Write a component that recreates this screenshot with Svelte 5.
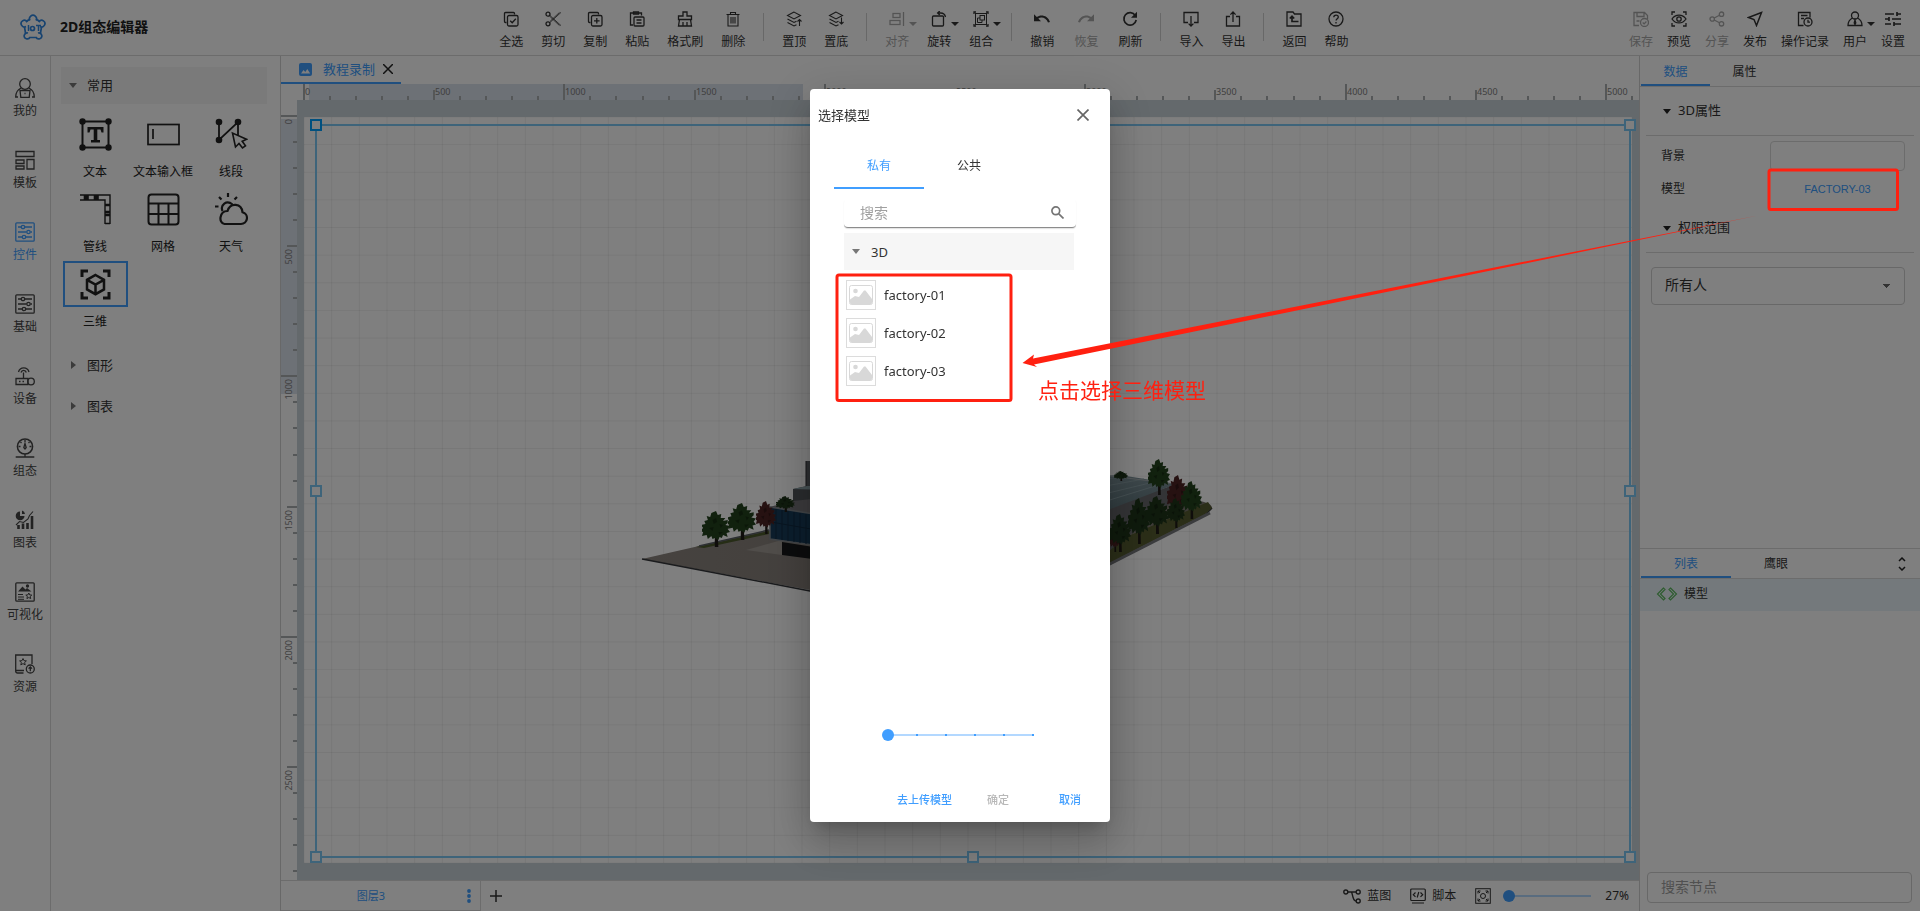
<script>
  const icons = {
    selectAll: '<path d="M3.5 11.5h-1a1 1 0 0 1-1-1v-8a1 1 0 0 1 1-1h8a1 1 0 0 1 1 1v1"/><rect x="4.5" y="4.5" width="10.5" height="10.5" rx="1.5"/><path d="m7.2 9.8 2 2 3.6-4"/>',
    cut: '<circle cx="3" cy="3.2" r="2"/><circle cx="3" cy="12.8" r="2"/><path d="M4.6 4.2 16 14.6M4.6 11.8 16 1.4M5.2 5.8l9.300 8.800M5.200 10.200l9.300-8.800" stroke-width=".8"/>',
    copy: '<path d="M3.5 11.5h-1a1 1 0 0 1-1-1v-8a1 1 0 0 1 1-1h8a1 1 0 0 1 1 1v1"/><rect x="4.5" y="4.5" width="10.5" height="10.5" rx="1.5"/><path d="M9.8 7v5.6M7 9.8h5.6"/>',
    paste: '<path d="M4 14H1.5V2h11v2.5"/><path d="M4.5 1h5v2h-5z"/><rect x="5" y="6" width="10" height="9" rx="1"/><path d="M7.5 9h5M7.5 12h5"/>',
    brush: '<path d="M6 1h4v4h4.5v3.5h-13V5H6zM2.5 8.5 1.5 15h13l-1-6.5M6 15v-4M10 15v-4"/>',
    trash: '<path d="M1.5 3.5h13M5.5 3.5v-2h5v2M3 3.5V15h10V3.5M6 6v6.5M8 6v6.5M10 6v6.5" stroke-width="1.100"/>',
    toTop: '<path d="M8 1 1.5 4.5 8 8l6.5-3.5zM1.5 8 8 11.5l2.5-1.3M1.5 11.5 8 15l2.5-1.3M13.5 15V8.5M11.5 10.5l2-2 2 2" stroke-width="1.1"/>',
    toBottom: '<path d="M8 1 1.5 4.5 8 8l6.5-3.5zM1.5 8 8 11.5l2.5-1.3M1.5 11.5 8 15l2.5-1.3M13.5 6.5V13M11.5 11l2 2 2-2" stroke-width="1.1"/>',
    align: '<path d="M14.5 1v14"/><rect x="4" y="2.5" width="7" height="4"/><rect x="1" y="9.5" width="10" height="4"/>',
    rotate: '<rect x="1.5" y="5" width="11" height="10" rx="1"/><path d="M7 2h2.5a5 5 0 0 1 5 4M8.8 0 6.6 2l2.2 2"/>',
    group: '<path d="M1 3V1h2M13 1h2v2M15 13v2h-2M3 15H1v-2"/><rect x="2.500" y="2.500" width="11" height="11" stroke-width="1"/><rect x="7" y="4.500" width="4.500" height="4.500" stroke-width="1"/><path d="M7 7H4.500v4.500H9V9" stroke-width="1"/>',
    undo: '<path d="M0 3.2v7h7L4.3 7.6C6.8 5.4 12 6 14 11.6l2-.7C13.700 4 6.500 3 2.800 6z" fill="currentColor" stroke="none"/>',
    redo: '<path d="M16 3.200v7H9l2.700-2.600C9.200 5.400 4 6 2 11.600l-2-.7C2.300 4 9.500 3 13.200 6z" fill="currentColor" stroke="none"/>',
    refresh: '<path d="M13.300 4.500A6.200 6.200 0 1 0 14.200 9" stroke-width="1.700"/><path d="M15 .8v6H9z" fill="currentColor" stroke="none"/>',
    import: '<path d="M5 11.500H1V1.500h14v10h-4M8 5v10M5.600 12.600 8 15l2.400-2.400"/>',
    export: '<path d="M5 5.500H1.500V15h13V5.500H11M8 11V1M5.400 3.600 8 1l2.600 2.600"/>',
    back: '<path d="M1 1h6l1.500 2H15v12H1z"/><path d="M6 5.500v5h6.500M3.800 7.500 6 5.300l2.200 2.200" stroke-width="1.700"/>',
    help: '<circle cx="8" cy="8" r="7"/><path d="M5.800 6.300c0-3 4.500-2.800 4.500-.2 0 1.700-2.200 1.700-2.200 3.500M8 11v1.400"/>',
    save: '<path d="M6 14.500H1V1.500h10.500l3 3V8M4 1.500v4h7v-4M3.500 10h3"/><circle cx="11.500" cy="11.500" r="4"/><path d="m9.700 11.500 1.400 1.400 2.300-2.400"/>',
    preview: '<path d="M1 4V1h3M12 1h3v3M15 12v3h-3M4 15H1v-3"/><path d="M1 8c3.500-5.200 10.500-5.200 14 0-3.500 5.200-10.500 5.200-14 0z"/><circle cx="8" cy="8" r="2.200"/>',
    share: '<circle cx="3.200" cy="8" r="2.200"/><circle cx="12.500" cy="3.200" r="2.200"/><circle cx="12.500" cy="12.800" r="2.200"/><path d="m5.200 7 5.300-2.800M5.200 9l5.300 2.800"/>',
    publish: '<path d="M14.500 1.500 1.500 6.500 7 8.500l2.500 6z" stroke-width="1.500"/>',
    record: '<path d="M6.500 14.500h-5v-13H13v5M4 4.500h6.500M4 7.500h3"/><circle cx="11" cy="11" r="4"/><path d="M11 8.800v2.400h2"/>',
    user: '<circle cx="8" cy="4.500" r="3.500"/><path d="M5.500 7C2.500 8.500 1 10.500 1 14.500h14c0-4-1.500-6-4.500-7.500M8 9l-.8 3 .8 1.400.8-1.400z"/>',
    settings: '<path d="M0 3h9M12 3h4M12 1v4M0 8h4M4 6v4M7 8h9M0 13h6M9 11v4M9 13h7" stroke-width="1.700"/>',
    mine: '<circle cx="10" cy="6" r="5.300"/><path d="M6 10C2 12 .7 15 .7 19H3M14 10c4 2 5.300 5 5.300 9H17M5 12.500h10l-.8 6.800H5.800zM9.500 15.500h1"/>',
    template: '<path d="M1 1.500h18v5H1zM1 10h8v3.500H1zM1 16h8v3H1zM12 9.500h7V19h-7z"/>',
    control: '<rect x=".8" y=".8" width="18.400" height="18.400" rx="1"/><path d="M3 5h3M10 5h7M3 10h8.500M15.500 10H17M3 15h4M11 15h6"/><circle cx="8" cy="5" r="1.700"/><circle cx="13.500" cy="10" r="1.700"/><circle cx="9" cy="15" r="1.700"/>',
    device: '<path d="M1 12.500h12v6H1zM8.500 12V6.500M3.500 6c1.500-5.500 9-5.500 10.500 0M6 6.500c.8-2.800 4.500-2.800 5.300 0M4 15.500h1.500M7.500 15.500H9"/><circle cx="16" cy="15.500" r="3.300"/>',
    scada: '<circle cx="10" cy="8.500" r="7.600" stroke-width="1.500"/><path d="M10 2v2M3.500 8.500h2M14.500 8.500h2M5.500 4l1 1M14.500 4l-1 1M10 16v3M.7 19h18.600M10 5.500 8.800 9.500 10 11l1.200-1.500z"/>',
    chart: '<path d="M5 1.500V6h4.500A4.400 4.400 0 1 1 5 1.500zM7 .5a4 4 0 0 1 3 3.500H7z" fill="currentColor" stroke="none"/><path d="M3.500 19v-4M8 19v-5.500M12.500 19v-6M17 19V6" stroke-width="2.600"/><path d="m1 15 3.500-3.500 4 1 4.500-3.500 1.500-3.500L18 1.500" stroke-width="1.100"/>',
    visual: '<rect x=".8" y=".8" width="18.400" height="18.400" rx="1"/><path d="m3 9.500 4.500-5 3 3 1.500-1.500 4.500 3.500z" fill="currentColor" stroke="none"/><circle cx="12.500" cy="4" r="1" fill="currentColor"/><path d="M3 12.500h5M3 15h6M3 17.300h6" stroke-width="1"/><path d="m13.800 11 .9 1.900 2.100.2-1.600 1.400.5 2.100-1.900-1.100-1.900 1.100.5-2.100-1.600-1.400 2.100-.2z" stroke-width="1"/>',
    asset: '<path d="M8.500 19H2.500a1.800 1.800 0 0 1-1.800-1.800V1H17v9M1 16.500h8"/><path d="m8 4.500 1 2.200 2.400.2-1.800 1.600.6 2.400L8 9.600l-2.200 1.300.6-2.400L4.600 6.900 7 6.700z" stroke-width="1"/><circle cx="15.300" cy="15" r="4"/><path d="M15.300 17.200v-4.200M13.600 14.600l1.700-1.700 1.700 1.700"/>',
    text: '<rect x="3.500" y="3.500" width="26" height="26" stroke-width="2"/><g fill="currentColor" stroke="none"><circle cx="3.500" cy="3.500" r="3.200"/><circle cx="29.500" cy="3.500" r="3.200"/><circle cx="3.500" cy="29.500" r="3.200"/><circle cx="29.500" cy="29.500" r="3.200"/><path d="M8.500 9h16v5.500h-2L21.500 11.500H18.300V22H21v2.500h-9V22h2.700V11.500h-3.200L10.500 14.500h-2z"/></g>',
    input: '<rect x="1" y="6.500" width="31" height="20" stroke-width="1.700"/><path d="M6 11v10" stroke-width="1.700"/>',
    line: '<path d="M4 4v18L23 4v14" stroke-width="1.800"/><g fill="currentColor" stroke="none"><circle cx="4" cy="4" r="3.300"/><circle cx="23" cy="4" r="3.300"/><circle cx="4" cy="22" r="3.300"/></g><path d="m17.500 15 3 14 3.500-3.500 3.500 4.500 3-2.200-3.300-4.600 4.300-2z" stroke-width="1.600" fill="#fff"/>',
    pipe: '<path d="M1 2h30v29M1 7h25v24M26 30.500h5" stroke-width="1.400"/><path d="M6 2v5M8.500 2v5M16 2v5M18.500 2v5M26 12h5M26 19h5M26 22h5" stroke-width="2.600"/>',
    grid: '<rect x="1.500" y="1.500" width="30" height="30" rx="3" stroke-width="2"/><path d="M1.500 10.500h30M1.500 21h30M11.500 10.500v21M21.500 10.500v21" stroke-width="2"/>',
    weather: '<path d="M9.500 31h16.500a6 6 0 0 0 1.500-11.800C26.500 10.500 15.500 9 12.500 18 4.500 18 3 30 9.500 31zM7.500 18C5 12 11.500 6.500 17.500 11.500" stroke-width="2.200"/><path d="M13 0v4M4 4l2.500 2.500M22 4l-2.500 2.500M-.5 13.500h4" stroke-width="2.200"/>',
    cube: '<path d="M3 9V3h6M24 3h6v6M30 24v6h-6M9 30H3v-6" stroke-width="3"/><path d="m16.500 7 8.500 4.800v9.600l-8.500 4.800L8 21.400v-9.600zM8 11.800l8.500 4.700 8.500-4.700M16.500 16.500v9.700" stroke-width="2.500"/>',
  };

  const toolGroups = [
    { items: [['全选', 'selectAll'], ['剪切', 'cut'], ['复制', 'copy'], ['粘贴', 'paste'], ['格式刷', 'brush'], ['删除', 'trash']] },
    { items: [['置顶', 'toTop'], ['置底', 'toBottom']] },
    { items: [['对齐', 'align', 'off menu'], ['旋转', 'rotate', 'menu'], ['组合', 'group', 'menu']] },
    { wide: true, items: [['撤销', 'undo'], ['恢复', 'redo', 'off'], ['刷新', 'refresh']] },
    { items: [['导入', 'import'], ['导出', 'export']] },
    { items: [['返回', 'back'], ['帮助', 'help']] },
  ];
  const userTools = [
    ['保存', 'save', 'off'], ['预览', 'preview'], ['分享', 'share', 'off'], ['发布', 'publish'],
    ['操作记录', 'record'], ['用户', 'user', 'menu'], ['设置', 'settings'],
  ];
  const rail = [
    ['我的', 'mine'], ['模板', 'template'], ['控件', 'control'], ['基础', 'control'], ['设备', 'device'],
    ['组态', 'scada'], ['图表', 'chart'], ['可视化', 'visual'], ['资源', 'asset'],
  ];
  const widgets = [
    ['文本', 'text'], ['文本输入框', 'input'], ['线段', 'line'], ['管线', 'pipe'],
    ['网格', 'grid'], ['天气', 'weather'], ['三维', 'cube'],
  ];
  const models = ['factory-01', 'factory-02', 'factory-03'];

  // One ruler step is 100 scene units.
  const step = 26.04;
  const ticks = (count) =>
    Array.from({ length: count }, (_, i) => ({
      at: Math.round(i * step),
      size: i % 10 === 0 ? 16 : i % 5 === 0 ? 10 : 4,
      label: i % 5 === 0 ? String(i * 100) : '',
    }));
  const hTicks = ticks(52);
  const vTicks = ticks(30);
  const cols = Array.from({ length: 49 }, (_, i) => (i * 100) / 48);
  const rows = Array.from({ length: 28 }, (_, i) => (i * 100) / 27);

  const trees = [
    [702, 511, 28, 36, 'g'], [728, 503, 28, 37, 'g'], [756, 501, 20, 33, 'r'], [776, 496, 19, 16, 'd'],
    [1114, 471, 14, 10, 'd'], [1148, 459, 22, 36, 'g'], [1167, 475, 22, 42, 'r'], [1181, 481, 21, 38, 'g'],
    [1108, 528, 14, 24, 'r'], [1109, 514, 22, 38, 'd'], [1128, 498, 22, 46, 'd'], [1145, 496, 24, 38, 'd'], [1167, 498, 18, 30, 'd'],
  ];
  const treeColors = { g: '#22421c', r: '#4c2222', d: '#1e3519' };

  let query = $state('');
  let nodeQuery = $state('');
  let zoomLevel = $state(0);
  let thumbSize = $state(0);
</script>

{#snippet icon(name, size, box)}
  <svg width={size} height={size} viewBox="0 0 {box} {box}" fill="none" stroke="currentColor" stroke-width="1.3" aria-hidden="true">{@html icons[name]}</svg>
{/snippet}

{#snippet tool(item)}
  <button class="tool {item[2] ?? ''}" disabled={item[2]?.includes('off')}>
    {@render icon(item[1], 16, 16)}
    <span>{item[0]}</span>
  </button>
{/snippet}

<div class="app">
  <header>
    <div class="brand">
      <svg width="26" height="26" viewBox="0 0 26 26" fill="none" stroke="#2f86e0" stroke-width="1.700">
        <path d="M9 5.500 6 8M17 5.500 20 8M4.500 13l1 6M21.500 13l-1 6M9.500 23.500h7"/>
        <path d="M10 6.500a3.500 3.500 0 1 1 6 0M6 12.500a3.300 3.300 0 1 1 1-5M20 12.500a3.300 3.300 0 1 0-1-5M8 19a3 3 0 1 0 2 4M18 19a3 3 0 1 1-2 4"/>
        <path d="M8.500 11v6M16 11.500h5M18.500 11.500V17" stroke-width="1.500"/><circle cx="12.500" cy="14.500" r="2"/>
      </svg>
      <h1>2D组态编辑器</h1>
    </div>
    <div class="tools">
      {#each toolGroups as group, i}
        {#if i}<i class="rule"></i>{/if}
        <div class="group" class:wide={group.wide}>
          {#each group.items as item}{@render tool(item)}{/each}
        </div>
      {/each}
    </div>
    <div class="group account">
      {#each userTools as item}{@render tool(item)}{/each}
    </div>
  </header>

  <main>
    <nav class="rail">
      {#each rail as item, i}
        <button class:active={i === 2}>{@render icon(item[1], 20, 20)}<span>{item[0]}</span></button>
      {/each}
    </nav>

    <aside class="library">
      <button class="fold open">常用</button>
      <div class="widgets">
        {#each widgets as item, i}
          <button class="widget" class:active={i === 6}>
            <span class="frame">{@render icon(item[1], 33, 33)}</span>
            <span>{item[0]}</span>
          </button>
        {/each}
      </div>
      <button class="fold">图形</button>
      <button class="fold">图表</button>
    </aside>

    <section class="stage">
      <div class="files">
        <button class="file">
          <svg width="13" height="13" viewBox="0 0 13 13"><rect width="13" height="13" rx="2" fill="currentColor"/><path d="m2 10.500 2.500-3.500 1.800 2 2-3 2.900 4.500z" fill="#fff"/></svg>
          <span>教程录制</span>
          <svg class="x" width="10" height="10" viewBox="0 0 10 10" stroke="#222" stroke-width="1.500"><path d="m0 0 10 10M10 0 0 10"/></svg>
        </button>
      </div>
      <div class="board">
        <i></i>
        <svg class="ruler" width="100%" height="16">
          <rect x="12" width="494" height="16" class="range"/>
          {#each hTicks as t}
            <rect x={t.at + 6} y={16 - t.size} width="2" height={t.size}/>
            <text x={t.at + 8} y="11">{t.label}</text>
          {/each}
        </svg>
        <svg class="ruler" width="16" height="100%">
          <rect y="19" width="16" height="275" class="range"/>
          {#each vTicks as t}
            <rect x={16 - t.size} y={t.at + 15} width={t.size} height="2"/>
            <text transform="translate(11 {t.at + 19}) rotate(-90)" text-anchor="end">{t.label}</text>
          {/each}
        </svg>
        <div class="canvas">
          <div class="page">
            <svg class="lines" width="100%" height="100%">
              {#each cols as c}<line x1="{c}%" x2="{c}%" y1="0" y2="100%"/>{/each}
              {#each rows as r}<line y1="{r}%" y2="{r}%" x1="0" x2="100%"/>{/each}
            </svg>
            <svg class="scene" viewBox="640 455 575 150">
              <defs>
                <linearGradient id="ground" x1="0" x2="1"><stop offset="0" stop-color="#8d8680"/><stop offset="1" stop-color="#7c7670"/></linearGradient>
                <linearGradient id="roof" x1="0" x2="0" y1="0" y2="1"><stop offset="0" stop-color="#7d9299"/><stop offset="1" stop-color="#5e757c"/></linearGradient>
              </defs>
              <path d="M642 559 699 546 770 530 850 515 1110 476 1204 502q8 2 8 6l-7 6-95 49-100 50-200-23z" fill="url(#ground)"/>
              <path d="m642 559 168 32 60 12M1212 508l-7 7-95 49-60 30" fill="none" stroke="#34363a" stroke-width="1.500"/>
              <path d="m696 547 73-16v3l-65 14z" fill="#4c5a2c"/>
              <path d="m699 546 70-16" stroke="#5a5f66" stroke-width="1.500"/>
              <path d="m746 550 36-10v15z" fill="#a09a94"/>
              <path d="M806 461h10v28h-10z" fill="#5c6064"/><path d="M806 461v28" stroke="#2b2d30"/>
              <path d="m793 489 14-3h20v20l-34-2z" fill="#54585c"/><path d="m793 489 14-3h20v4z" fill="#8fa5ab"/>
              <path d="m769 507 25-6 26-3v20z" fill="#77757a"/>
              <path d="m770 507 50 8v31l-50-7z" fill="#173c5a" stroke="#82888e" stroke-width="1.500"/>
              <path d="M776 509v30M782 510v30M788 511v30M794 512v30M800 513v30M806 514v30M771 522l40 7" stroke="#102a42"/>
              <path d="m782 542 38 6v12l-38-5z" fill="#17181a"/>
              <path d="M1100 568v-20l108-46 4 6-7 6z" fill="#565c30"/>
              <path d="m1100 569 110-56" stroke="#77797d" stroke-width="3"/>
              <path d="m1176 484-4 18-72 56v-47z" fill="#67686c"/>
              <path d="m1100 476 20-1 56 9-76 29z" fill="url(#roof)"/>
              <path d="m1100 480 28-4M1100 487l44-8M1100 495l58-14M1100 503l68-21" stroke="#8a9fa5"/>
              <path d="m1110 476 66 8" stroke="#a6adb0"/>
              {#each trees as [x, y, w, h, c]}
                <svg {x} {y} width={w} height={h} viewBox="0 0 24 36" preserveAspectRatio="none">
                  <path d="M11 22h2.500l.5 14h-3z" fill="#1f1a16"/>
                  <path d="m12 0 1.500 4 3-1-.5 4 4 0-2 3 4-1 0 3-2 2 4 1-2 3 2 3-3 1 1 4-4-2-1 3-2-1-1 3-3-2-2 1-1-3-3 3-1-4-4 1 1-4-3-1 3-3-2-3 4-1-1-3 3-1-1-4 3 1 1-4z" fill={treeColors[c]}/>
                  <path d="m9 9 3-2 1 4-3 2zm6 4 3 1-2 3zm-9 4 4-1-1 4zm8 4 4 0-3 3z" fill="#000" opacity=".3"/>
                </svg>
              {/each}
            </svg>
            <div class="selection">
              {#each ['tl', 'tr', 'ml', 'mr', 'bl', 'bc', 'br'] as p}<i class={p}></i>{/each}
            </div>
          </div>
        </div>
      </div>
      <footer>
        <div class="layer">
          <button>图层3</button>
          <svg width="4" height="14" viewBox="0 0 4 14" fill="currentColor"><circle cx="2" cy="2" r="1.900"/><circle cx="2" cy="7" r="1.900"/><circle cx="2" cy="12" r="1.900"/></svg>
        </div>
        <button class="add" aria-label="添加图层"><svg width="12" height="12" viewBox="0 0 12 12" stroke="currentColor" stroke-width="1.500"><path d="M6 0v12M0 6h12"/></svg></button>
        <button class="foot"><svg width="18" height="16" viewBox="0 0 18 16" fill="none" stroke="currentColor" stroke-width="1.400"><circle cx="2.800" cy="4" r="2"/><circle cx="15.200" cy="4" r="2"/><circle cx="15.200" cy="13" r="2"/><path d="M5 4h8M8 4c2 0 1 9 5 9"/></svg>蓝图</button>
        <button class="foot"><svg width="16" height="16" viewBox="0 0 16 16" fill="none" stroke="currentColor" stroke-width="1.200"><rect x=".7" y="1" width="14.600" height="11.500" rx="1"/><path d="M2 15h12M5.500 4.500 3.300 6.700l2.200 2.200M10.500 4.500l2.200 2.200-2.200 2.200M8.800 4 7.200 9.500"/></svg>脚本</button>
        <button aria-label="适应画布"><svg width="16" height="16" viewBox="0 0 16 16" fill="none" stroke="currentColor" stroke-width="1"><rect x=".7" y=".7" width="14.600" height="14.600"/><circle cx="8" cy="8" r="2.500"/><path d="M3 5.500V3h2.500M10.500 3H13v2.500M13 10.500V13h-2.500M5.500 13H3v-2.500M3 3l2 2M13 3l-2 2M13 13l-2-2M3 13l2-2"/></svg></button>
        <input class="slider zoom" type="range" min="0" max="100" bind:value={zoomLevel} aria-label="缩放"/>
        <output>27%</output>
      </footer>
    </section>

    <aside class="inspector">
      <div class="tabs"><button class="active">数据</button><button>属性</button></div>
      <div class="props">
        <button class="head">3D属性</button>
        <div class="fields">
          <label for="bg">背景</label><input id="bg" class="swatch" type="text"/>
          <span>模型</span><button class="pick">FACTORY-03</button>
        </div>
        <button class="head">权限范围</button>
        <div class="scope">
          <select aria-label="权限范围"><option>所有人</option></select>
        </div>
      </div>
      <div class="outline">
        <div class="tabs lower">
          <button class="active">列表</button><button>鹰眼</button>
          <svg width="8" height="14" viewBox="0 0 8 14" fill="none" stroke="#222" stroke-width="1.500"><path d="m1 4 3-3 3 3M1 10l3 3 3-3"/></svg>
        </div>
        <button class="node">
          <svg width="22" height="14" viewBox="0 0 22 14" fill="none" stroke="#5cb860" stroke-width="1.200"><path d="M7.500 1 1.500 7l6 6 1.500-1.500L4.500 7 9 2.500zM14.500 1l6 6-6 6-1.500-1.500L17.500 7 13 2.500z"/></svg>
          模型
        </button>
        <div class="search-node"><input type="text" placeholder="搜索节点" aria-label="搜索节点" bind:value={nodeQuery}/></div>
      </div>
    </aside>
  </main>
</div>

<div class="backdrop">
  <div class="dialog" role="dialog" aria-labelledby="dialog-title">
    <div class="title">
      <h2 id="dialog-title">选择模型</h2>
      <button aria-label="关闭"><svg width="12" height="12" viewBox="0 0 12 12" stroke="#666" stroke-width="1.700"><path d="m.5.5 11 11M11.500.5l-11 11"/></svg></button>
    </div>
    <div class="kinds"><button class="active">私有</button><button>公共</button></div>
    <div class="search">
      <input type="text" placeholder="搜索" aria-label="搜索" bind:value={query}/>
      <svg width="13" height="13" viewBox="0 0 13 13" fill="none" stroke="#757575" stroke-width="1.700"><circle cx="4.800" cy="4.800" r="3.900"/><path d="m7.800 7.800 4.700 4.700"/></svg>
    </div>
    <button class="category">3D</button>
    <div class="models">
      {#each models as model}
        <button>
          <span class="thumb">
            <svg width="24" height="20" viewBox="0 0 24 20"><rect x=".5" y=".5" width="23" height="19" rx="2" fill="#fff" stroke="#d8d8d8"/><circle cx="6.500" cy="6" r="2.300" fill="#d8d8d8"/><path d="M1 14.500 6 11l4 1 5-6.500h1.500L23 14v3.500a2 2 0 0 1-2 2H3a2 2 0 0 1-2-2z" fill="#d8d8d8"/></svg>
          </span>
          {model}
        </button>
      {/each}
    </div>
    <input class="slider size" type="range" min="0" max="5" bind:value={thumbSize} aria-label="缩略图大小"/>
    <div class="actions">
      <button>去上传模型</button><button disabled>确定</button><button>取消</button>
    </div>
  </div>
</div>

<svg class="notes" viewBox="0 0 1920 911" preserveAspectRatio="xMidYMin meet">
  <rect x="837" y="275" width="174" height="125.500" rx="2"/>
  <rect x="1769" y="170" width="128.500" height="39.500" rx="2"/>
  <path d="M1022.500 363 1034 354.500 1033 358.500 1758 215.500 1034 364.500 1037 367z"/>
  <text x="1038" y="398">点击选择三维模型</text>
</svg>

<style>
  :global(body) { margin: 0; background: #fff; }
  .app, .backdrop, .notes { font-family: "Noto Sans", "Noto Sans CJK SC", sans-serif; font-size: 12px; line-height: 16px; color: #333; }
  *, *::before, *::after { box-sizing: border-box; }
  button, input, select { font: inherit; color: inherit; background: none; border: 0; padding: 0; margin: 0; outline: 0; }
  svg { display: block; flex: none; }
  .app { height: 100vh; display: flex; flex-direction: column; overflow: hidden; }

  header { display: flex; align-items: stretch; height: 56px; border-bottom: 1px solid #d8d8d8; flex: none; }
  .brand { flex: 0 0 26%; display: flex; align-items: center; gap: 14px; padding: 0 0 2px 20px; }
  h1 { font-size: 14px; line-height: 20px; margin: 0; color: #222; }
  .tools { display: flex; gap: 18px; margin-right: auto; }
  .group { display: flex; gap: 18px; }
  .group.wide { gap: 20px; }
  .account { gap: 14px; padding-right: 15px; }
  .rule { width: 1px; background: #d0d0d0; height: 28px; margin-top: 13px; }
  .tool { position: relative; display: flex; flex-direction: column; align-items: center; gap: 7px; padding-top: 11px; white-space: nowrap; }
  .tool.off { color: #a8a8a8; }
  .menu::after { content: ""; position: absolute; left: 100%; top: 22px; border: 4px solid transparent; border-top-color: currentColor; border-bottom: 0; }

  main { flex: 1; display: flex; min-height: 0; }
  .rail { width: 51px; border-right: 1px solid #d8d8d8; padding-top: 22px; display: flex; flex-direction: column; gap: 28px; flex: none; }
  .rail button { display: flex; flex-direction: column; align-items: center; gap: 5px; height: 44px; color: #444; white-space: nowrap; }
  .rail .active { color: #409eff; }

  .library { width: 230px; border-right: 1px solid #d0d0d0; padding: 11px 13px 0 10px; flex: none; }
  .fold { position: relative; display: block; width: 100%; height: 37px; margin-bottom: 4px; padding: 0 0 2px 26px; text-align: left; font-size: 13px; }
  .fold::before { content: ""; position: absolute; left: 10px; top: 14px; border: 4px solid transparent; border-left: 5px solid #777; border-right: 0; }
  .fold.open { background: #f5f5f5; margin-bottom: 7px; }
  .fold.open::before { left: 8px; top: 16px; border: 4px solid transparent; border-top: 5px solid #777; border-bottom: 0; }
  .widgets { display: grid; grid-template-columns: repeat(3, 68px); padding-bottom: 11px; }
  .widget { display: flex; flex-direction: column; align-items: center; line-height: 29px; white-space: nowrap; color: #222; }
  .frame { display: grid; place-items: center; width: 65px; height: 46px; border: 2px solid transparent; }
  .active .frame { border-color: #409eff; }

  .stage { flex: 1; min-width: 0; display: flex; flex-direction: column; }
  .files { height: 28px; flex: none; }
  .file { display: flex; align-items: center; width: 120px; height: 28px; padding-left: 18px; color: #409eff; border-bottom: 2px solid #409eff; font-size: 13px; white-space: nowrap; }
  .file span { margin: 0 8px 0 11px; }
  .board { flex: 1; min-height: 0; display: grid; grid-template: 16px minmax(0, 1fr) / 16px minmax(0, 1fr); }
  .ruler { overflow: hidden; fill: #aaaeb0; }
  .ruler .range { fill: #dbe2ed; }
  .ruler text { font-size: 9px; fill: #808080; }
  .canvas { background: #c9d3d9; padding: 17px 7px; display: flex; }
  .page { flex: 1; position: relative; background: #fff; }
  .lines { position: absolute; stroke: #000; stroke-opacity: .06; }
  .scene { position: absolute; left: 25.3%; top: 45.3%; width: 43.3%; }
  .selection { position: absolute; inset: 7px 1px 5px 11px; border: 2px solid #7cc8f4; }
  .selection i { position: absolute; width: 12px; height: 12px; border: 2px solid #7cc8f4; background: #fff; margin: -7px; }
  .selection .tl { left: 0; top: 0; border-color: #00a0ff; }
  .selection .tr { left: 100%; top: 0; }
  .selection .ml { left: 0; top: 50%; }
  .selection .mr { left: 100%; top: 50%; }
  .selection .bl { left: 0; top: 100%; }
  .selection .bc { left: 50%; top: 100%; }
  .selection .br { left: 100%; top: 100%; }
  .selection .tr, .selection .mr, .selection .br { margin-left: -5px; }
  .selection .bl, .selection .bc, .selection .br { margin-top: -5px; }
  .selection .ml, .selection .mr { margin-top: -6px; }
  .selection .bc { margin-left: -6px; }

  footer { display: flex; align-items: center; height: 31px; border-top: 1px solid #d8d8d8; flex: none; padding-right: 10px; }
  .layer { display: flex; align-items: center; width: 200px; align-self: stretch; border: 1px solid #d8d8d8; border-width: 0 1px 1px 0; color: #409eff; font-size: 11px; padding-right: 9px; }
  .layer button { flex: 1; padding-right: 6px; }
  .add { margin: 0 auto 0 9px; }
  .foot { display: flex; align-items: center; gap: 6px; margin-right: 19px; }
  output { margin-left: 8px; font-size: 12px; }

  .slider { appearance: none; height: 12px; }
  .slider::-webkit-slider-runnable-track { height: 12px; background: linear-gradient(#b3d8ff, #b3d8ff) center / calc(100% - 12px) 2px no-repeat; }
  .slider::-webkit-slider-thumb { appearance: none; width: 12px; height: 12px; border-radius: 50%; background: #409eff; }
  .zoom { width: 94px; margin-left: 12px; }

  .inspector { width: 281px; border-left: 1px solid #d0d0d0; flex: none; display: flex; flex-direction: column; }
  .tabs { display: flex; height: 31px; border-bottom: 1px solid #d8d8d8; flex: none; padding-left: 1px; }
  .tabs button { width: 69px; border-bottom: 2px solid transparent; padding-top: 3px; }
  .tabs .active, .kinds .active { color: #409eff; border-bottom-color: #409eff; }
  .lower { border-top: 1px solid #d8d8d8; }
  .lower button { width: 90px; }
  .lower svg { margin: auto 14px auto auto; }
  .props { flex: 56 1 0; min-height: 0; padding: 0 6px; }
  .outline { flex: 44 1 0; min-height: 0; display: flex; flex-direction: column; }
  .head { position: relative; display: block; width: 100%; height: 49px; padding: 0 0 2px 32px; text-align: left; font-size: 13px; border-bottom: 1px solid #d8d8d8; }
  .head::before { content: ""; position: absolute; left: 17px; top: 22px; border: 4px solid transparent; border-top: 5px solid #222; border-bottom: 0; }
  .fields { display: grid; grid-template-columns: 1fr 135px; padding: 5px 9px 0 15px; align-items: center; row-gap: 2px; height: 68px; }
  .swatch { height: 30px; border: 1px solid #d8d8d8; border-radius: 4px; }
  .pick { font: 11px "Liberation Sans", sans-serif; color: #409eff; height: 30px; }
  .scope { padding: 14px 9px 0 5px; }
  .scope select { appearance: none; width: 100%; height: 38px; border: 1px solid #d0d0d0; border-radius: 4px; padding: 0 0 2px 13px; font-size: 14px; background: linear-gradient(to bottom right, #666 50%, transparent 50%) right 13px center / 4px 4px no-repeat, linear-gradient(to bottom left, #666 50%, transparent 50%) right 17px center / 4px 4px no-repeat; }
  .node { display: flex; align-items: center; gap: 6px; padding: 0 0 2px 16px; height: 32px; flex: none; background: #e9f3f8; }
  .search-node { margin-top: auto; padding: 0 8px 8px 7px; }
  .search-node input { width: 100%; height: 31px; border: 1px solid #d0d0d0; border-radius: 4px; padding: 0 0 2px 13px; font-size: 14px; }
  ::placeholder { color: #a0a0a0; opacity: 1; }

  .backdrop { position: fixed; inset: 0; display: flex; align-items: center; justify-content: center; background: rgba(0, 0, 0, .5); }
  .dialog { width: 300px; height: calc(100vh - 178px); background: #fff; border-radius: 4px; display: flex; flex-direction: column; box-shadow: 0 11px 15px -7px rgba(0, 0, 0, .2), 0 24px 38px 3px rgba(0, 0, 0, .14), 0 9px 46px 8px rgba(0, 0, 0, .12); }
  .title { display: flex; justify-content: space-between; align-items: center; padding: 16px 21px 0 8px; height: 36px; }
  h2 { font-size: 13px; line-height: 20px; font-weight: 400; margin: 0; }
  .kinds { display: flex; padding: 16px 24px 0; }
  .kinds button { width: 90px; height: 48px; border-bottom: 2px solid transparent; padding-top: 3px; }
  .search { display: flex; align-items: center; margin: 10px 34px 0; height: 29px; border-bottom: 1px solid #8c8c8c; border-radius: 4px; padding: 0 12px 2px 16px; box-shadow: 0 1px 1px rgba(0, 0, 0, .12); }
  .search input { flex: 1; min-width: 0; font-size: 14px; height: 26px; }
  .category { position: relative; margin: 5px 36px 0 34px; height: 37px; background: #f6f6f6; text-align: left; padding-left: 27px; font-size: 13px; }
  .category::before { content: ""; position: absolute; left: 8px; top: 16px; border: 4px solid transparent; border-top: 5px solid #777; border-bottom: 0; }
  .models { display: flex; flex-direction: column; gap: 8px; padding: 10px 36px 0; }
  .models button { display: flex; align-items: center; gap: 8px; font-size: 13px; }
  .thumb { display: grid; place-items: center; width: 30px; height: 30px; border: 1px solid #dcdcdc; }
  .size { width: 156px; margin: auto 0 51px 72px; }
  .size::-webkit-slider-runnable-track { background: repeating-linear-gradient(90deg, transparent 0 27px, #409eff 27px 29px) 7px center / 145px 2px no-repeat, linear-gradient(#b3d8ff, #b3d8ff) center / 144px 2px no-repeat; }
  .actions { display: flex; justify-content: flex-end; padding: 0 29px 14px; color: #409eff; font-size: 11px; font-weight: 500; }
  .actions button:nth-child(2) { margin: 0 50px 0 35px; color: #b8b8b8; }

  .notes { position: absolute; inset: 0; width: 100%; pointer-events: none; fill: #ff2010; }
  .notes rect { fill: none; stroke: #ff2010; stroke-width: 3; }
  .notes text { font-size: 21px; }
</style>
